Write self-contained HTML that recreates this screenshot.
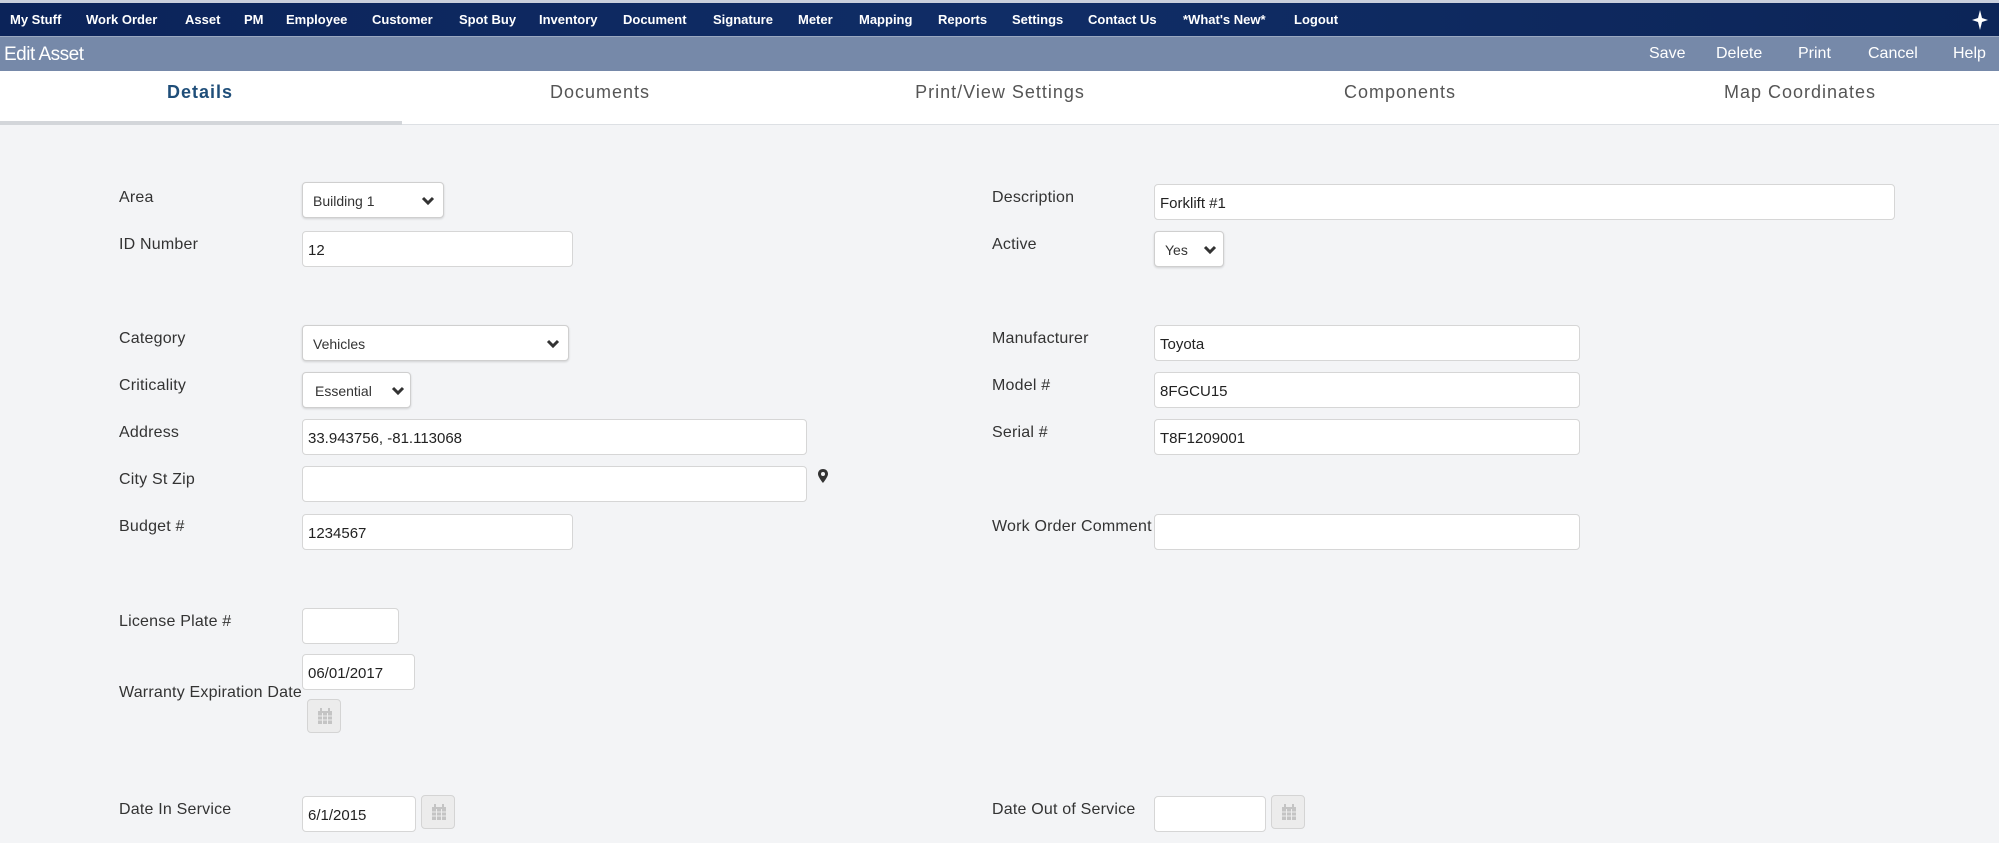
<!DOCTYPE html>
<html><head><meta charset="utf-8"><style>
*{box-sizing:border-box;margin:0;padding:0}
body{width:1999px;height:843px;overflow:hidden;background:#f3f4f6;font-family:"Liberation Sans",sans-serif;position:relative}
.nav{position:absolute;left:0;top:0;width:1999px;height:36px;background:linear-gradient(90deg,#0b2359,#102d66 50%,#0c2558);border-top:3px solid #c9cfdc}
.nav span{position:absolute;top:9px;color:#fff;font-size:13px;font-weight:bold;letter-spacing:0}
.bar{position:absolute;left:0;top:36px;width:1999px;height:35px;background:#7689a9;border-top:1px solid #9aa8c0}
.bar .t{position:absolute;left:4px;top:7px;color:#fff;font-size:19px;letter-spacing:-0.5px}
.bar span{position:absolute;top:8px;color:#fff;font-size:16px}
.tabs{position:absolute;left:0;top:71px;width:1999px;height:54px;background:#fff;border-bottom:1px solid #dde0e4}
.tabs span{position:absolute;top:11px;width:400px;text-align:center;font-size:18px;letter-spacing:1px;color:#555}
.tabs .ul{position:absolute;left:0;top:50px;width:402px;height:4px;background:#d3d6da}
.l{position:absolute;font-size:16px;color:#333;letter-spacing:0.2px}
.i{position:absolute;background:#fff;border:1px solid #d6d6d6;border-radius:4px;height:36px;font-size:15px;color:#222;padding:10px 5px}
.s{position:absolute;background:#fff;border:1px solid #cfcfcf;border-radius:4px;height:36px;font-size:14px;color:#333;padding:10px 10px;box-shadow:0 1px 2px rgba(0,0,0,.15)}
.s svg{position:absolute;right:8px;top:13px}
.c{position:absolute;width:34px;height:34px;border:1px solid #d4d4d4;border-radius:4px;background:#ececec}
.c svg{position:absolute;left:9px;top:8px}
</style></head><body>
<div class="nav">
<span style="left:10px">My Stuff</span><span style="left:86px">Work Order</span><span style="left:185px">Asset</span><span style="left:244px">PM</span><span style="left:286px">Employee</span><span style="left:372px">Customer</span><span style="left:459px">Spot Buy</span><span style="left:539px">Inventory</span><span style="left:623px">Document</span><span style="left:713px">Signature</span><span style="left:798px">Meter</span><span style="left:859px">Mapping</span><span style="left:938px">Reports</span><span style="left:1012px">Settings</span><span style="left:1088px">Contact Us</span><span style="left:1183px">*What's New*</span><span style="left:1294px">Logout</span>
<svg style="position:absolute;left:1972px;top:7px" width="16" height="20" viewBox="0 0 16 20"><path d="M8 0 L10 8 L16 10 L10 12 L8 20 L6 12 L0 10 L6 8Z" fill="#fff"/></svg>
</div>
<div class="bar"><div class="t">Edit Asset</div>
<span style="left:1649px">Save</span><span style="left:1716px">Delete</span><span style="left:1798px">Print</span><span style="left:1868px">Cancel</span><span style="left:1953px">Help</span></div>
<div class="tabs">
<span style="left:0;color:#1f4e79;font-weight:bold">Details</span><span style="left:400px">Documents</span><span style="left:800px">Print/View Settings</span><span style="left:1200px">Components</span><span style="left:1600px">Map Coordinates</span>
<div class="ul"></div></div>

<div class="l" style="left:119px;top:189px">Area</div>
<div class="s" style="left:302px;top:182px;width:142px">Building 1<svg width="14" height="10" viewBox="0 0 14 10"><path d="M2 2 L7 7 L12 2" stroke="#333" stroke-width="3" fill="none"/></svg></div>
<div class="l" style="left:119px;top:236px">ID Number</div>
<div class="i" style="left:302px;top:231px;width:271px">12</div>
<div class="l" style="left:119px;top:330px">Category</div>
<div class="s" style="left:302px;top:325px;width:267px">Vehicles<svg width="14" height="10" viewBox="0 0 14 10"><path d="M2 2 L7 7 L12 2" stroke="#333" stroke-width="3" fill="none"/></svg></div>
<div class="l" style="left:119px;top:377px">Criticality</div>
<div class="s" style="left:302px;top:372px;width:109px;padding-left:12px">Essential<svg width="14" height="10" viewBox="0 0 14 10" style="right:5px"><path d="M2 2 L7 7 L12 2" stroke="#333" stroke-width="3" fill="none"/></svg></div>
<div class="l" style="left:119px;top:424px">Address</div>
<div class="i" style="left:302px;top:419px;width:505px">33.943756, -81.113068</div>
<div class="l" style="left:119px;top:471px">City St Zip</div>
<div class="i" style="left:302px;top:466px;width:505px"></div>
<svg style="position:absolute;left:818px;top:469px" width="10" height="14" viewBox="0 0 10 14"><path d="M5 0 C2 0 0 2 0 5 C0 8 5 14 5 14 C5 14 10 8 10 5 C10 2 8 0 5 0Z M5 3 A2 2 0 1 1 5 7 A2 2 0 1 1 5 3Z" fill="#333" fill-rule="evenodd"/></svg>
<div class="l" style="left:119px;top:518px">Budget #</div>
<div class="i" style="left:302px;top:514px;width:271px">1234567</div>
<div class="l" style="left:119px;top:613px">License Plate #</div>
<div class="i" style="left:302px;top:608px;width:97px"></div>
<div class="i" style="left:302px;top:654px;width:113px">06/01/2017</div>
<div class="l" style="left:119px;top:684px">Warranty Expiration Date</div>
<div class="c" style="left:307px;top:699px"><svg width="16" height="17" viewBox="0 0 16 17"><rect x="1" y="3" width="14" height="13" fill="#c4c4c4"/><rect x="3" y="0" width="2" height="4" fill="#c4c4c4"/><rect x="11" y="0" width="2" height="4" fill="#c4c4c4"/><path d="M1 8H15M1 12H15M5.5 5V16M10.5 5V16" stroke="#ececec" stroke-width="1"/></svg></div>
<div class="l" style="left:119px;top:801px">Date In Service</div>
<div class="i" style="left:302px;top:796px;width:114px">6/1/2015</div>
<div class="c" style="left:421px;top:795px"><svg width="16" height="17" viewBox="0 0 16 17"><rect x="1" y="3" width="14" height="13" fill="#c4c4c4"/><rect x="3" y="0" width="2" height="4" fill="#c4c4c4"/><rect x="11" y="0" width="2" height="4" fill="#c4c4c4"/><path d="M1 8H15M1 12H15M5.5 5V16M10.5 5V16" stroke="#ececec" stroke-width="1"/></svg></div>

<div class="l" style="left:992px;top:189px">Description</div>
<div class="i" style="left:1154px;top:184px;width:741px">Forklift #1</div>
<div class="l" style="left:992px;top:236px">Active</div>
<div class="s" style="left:1154px;top:231px;width:70px;padding-left:10px">Yes<svg width="14" height="10" viewBox="0 0 14 10" style="right:6px"><path d="M2 2 L7 7 L12 2" stroke="#333" stroke-width="3" fill="none"/></svg></div>
<div class="l" style="left:992px;top:330px">Manufacturer</div>
<div class="i" style="left:1154px;top:325px;width:426px">Toyota</div>
<div class="l" style="left:992px;top:377px">Model #</div>
<div class="i" style="left:1154px;top:372px;width:426px">8FGCU15</div>
<div class="l" style="left:992px;top:424px">Serial #</div>
<div class="i" style="left:1154px;top:419px;width:426px">T8F1209001</div>
<div class="l" style="left:992px;top:518px">Work Order Comment</div>
<div class="i" style="left:1154px;top:514px;width:426px"></div>
<div class="l" style="left:992px;top:801px">Date Out of Service</div>
<div class="i" style="left:1154px;top:796px;width:112px"></div>
<div class="c" style="left:1271px;top:795px"><svg width="16" height="17" viewBox="0 0 16 17"><rect x="1" y="3" width="14" height="13" fill="#c4c4c4"/><rect x="3" y="0" width="2" height="4" fill="#c4c4c4"/><rect x="11" y="0" width="2" height="4" fill="#c4c4c4"/><path d="M1 8H15M1 12H15M5.5 5V16M10.5 5V16" stroke="#ececec" stroke-width="1"/></svg></div>
</body></html>
